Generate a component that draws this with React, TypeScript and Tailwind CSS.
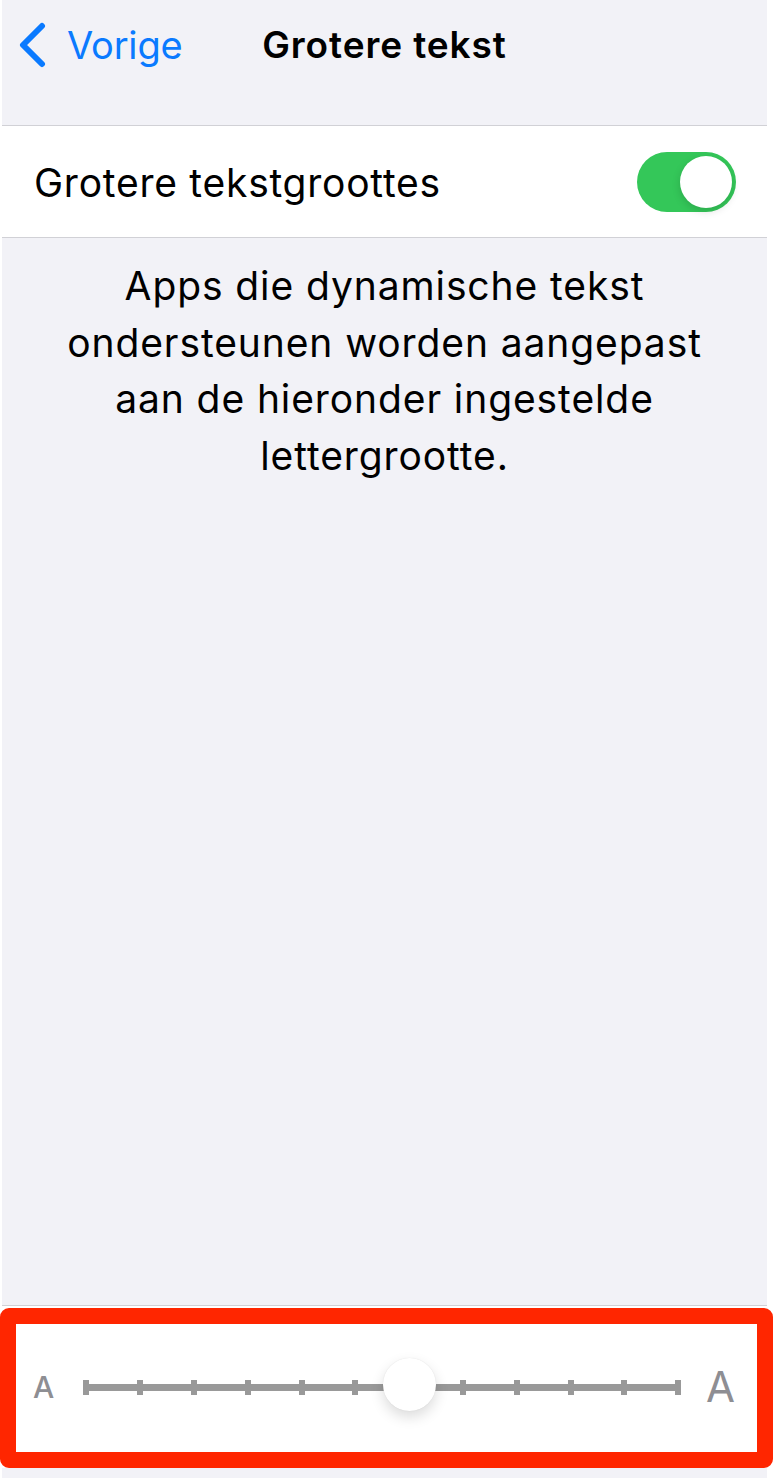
import React, { useState } from 'react';

const TICKS = 12;
const TRACK_W = 598;
const TICK_W = 6;

function Chevron() {
  return (
    <svg width="28" height="46" viewBox="0 0 28 46" fill="none">
      <path d="M24 4 L5 23 L24 42" stroke="#0a7aff" strokeWidth="6" strokeLinecap="round" strokeLinejoin="round" />
    </svg>
  );
}

function Toggle({ on, onChange }: { on: boolean; onChange: (v: boolean) => void }) {
  return (
    <button
      onClick={() => onChange(!on)}
      className={`w-[99px] h-[60px] rounded-full p-[4px] flex transition-colors ${on ? 'bg-[#34c759] justify-end' : 'bg-[#e9e9eb] justify-start'}`}
    >
      <span className="w-[52px] h-[52px] rounded-full bg-white shadow-[0_3px_8px_rgba(0,0,0,0.15)]" />
    </button>
  );
}

function TextSizeSlider({ value }: { value: number }) {
  const step = (TRACK_W - TICK_W) / (TICKS - 1);
  const knobLeft = value * step + TICK_W / 2 - 26.5;

  return (
    <div className="flex items-center h-full pl-[31px] pr-[32px]">
      <span className="text-[30px] leading-none font-medium text-[#8e8e93]">A</span>
      <div className="relative ml-[29px] w-[598px] h-[15px] flex items-center">
        <div className="w-full h-[7px] bg-[#999999]" />
        <div className="absolute inset-0 flex justify-between">
          {Array.from({ length: TICKS }).map((_, i) => (
            <div key={i} className="w-[6px] h-[15px] bg-[#999999]" />
          ))}
        </div>
        <div
          className="absolute top-[-22px] w-[53px] h-[53px] rounded-full bg-white shadow-[0_6px_14px_rgba(0,0,0,0.14),0_0_1px_rgba(0,0,0,0.12)]"
          style={{ left: knobLeft }}
        />
      </div>
      <span className="ml-auto text-[42px] leading-none text-[#8e8e93]">A</span>
    </div>
  );
}

export default function App() {
  const [larger, setLarger] = useState(true);

  return (
    <div className="w-[774px] h-[1478px] bg-white font-['Inter','Noto_Sans',sans-serif] text-black antialiased">
      <div className="ml-[2px] w-[765px] h-full bg-[#f2f2f7] flex flex-col">
        {/* navigation bar */}
        <div className="h-[125px] grid grid-cols-[1fr_auto_1fr] items-start pt-[22px]">
          <button className="flex items-center pl-[16px] text-[#0a7aff]">
            <Chevron />
            <span className="ml-[21px] text-[38px] leading-[46px] tracking-[-0.2px]">Vorige</span>
          </button>
          <h1 className="text-[37px] leading-[46px] font-semibold tracking-[0.9px]">Grotere tekst</h1>
          <div />
        </div>

        {/* toggle row */}
        <div className="h-[113px] bg-white border-y border-[#d1d1d6] flex items-center justify-between pl-[32px] pr-[31px]">
          <span className="text-[39px] tracking-[0.75px] pt-[4px]">Grotere tekstgroottes</span>
          <Toggle on={larger} onChange={setLarger} />
        </div>

        {/* footer text */}
        <p className="pt-[20px] text-center text-[39px] leading-[56.5px] tracking-[0.9px]">
          Apps die dynamische tekst
          <br />
          ondersteunen worden aangepast
          <br />
          aan de hieronder ingestelde
          <br />
          lettergrootte.
        </p>

        <div className="flex-1" />

        {/* text size slider */}
        <div className="relative h-[163px] bg-white border-t border-[#d1d1d6]">
          <TextSizeSlider value={6} />
          <div className="absolute top-[2px] bottom-0 left-[-2px] right-[-6px] border-[16px] border-[#ff2600] rounded-[9px] pointer-events-none" />
        </div>
        <div className="h-[10px]" />
      </div>
    </div>
  );
}
